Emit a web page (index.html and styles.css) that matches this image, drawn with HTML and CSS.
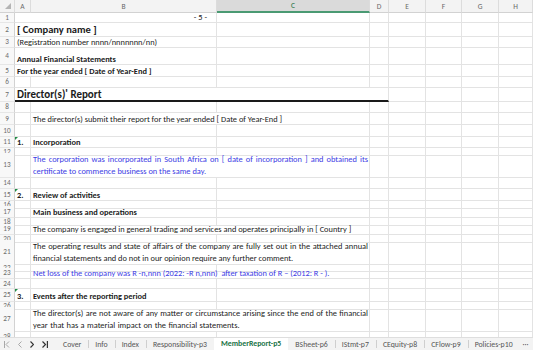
FILE: index.html
```html
<!DOCTYPE html>
<html lang="en">
  <head>
    <meta charset="UTF-8" />
    <meta name="viewport" content="width=device-width, initial-scale=1.0" />
    <title>MemberReport-p5</title>
    <link rel="stylesheet" href="styles.css">
  </head>
  <body>
    <div class="sheet">
      <div class="colhead">
        <div class="hc corner">
          <svg width="6" height="6" viewBox="0 0 6 6"><path d="M6 0 L6 6 L0 6 Z" fill="#b4b4b4" /></svg>
        </div>
        <div class="hc">A</div>
        <div class="hc">B</div>
        <div class="hc active">C</div>
        <div class="hc">D</div>
        <div class="hc">E</div>
        <div class="hc">F</div>
        <div class="hc">G</div>
        <div class="hc">H</div>
      </div>

      <div class="row h10">
        <div class="rn">1</div>
        <div class="c s2 page">- 5 -</div>
        <div class="c"></div><div class="c"></div><div class="c"></div><div class="c"></div><div class="c"></div><div class="c"></div>
      </div>
      <div class="row h14">
        <div class="rn">2</div>
        <div class="c s2 company">[ Company name ]</div>
        <div class="c"></div><div class="c"></div><div class="c"></div><div class="c"></div><div class="c"></div><div class="c"></div>
      </div>
      <div class="row h11">
        <div class="rn">3</div>
        <div class="c s2">(Registration number nnnn/nnnnnnn/nn)</div>
        <div class="c"></div><div class="c"></div><div class="c"></div><div class="c"></div><div class="c"></div><div class="c"></div>
      </div>
      <div class="row h17">
        <div class="rn">4</div>
        <div class="c s2 bold">Annual Financial Statements</div>
        <div class="c"></div><div class="c"></div><div class="c"></div><div class="c"></div><div class="c"></div><div class="c"></div>
      </div>
      <div class="row h12">
        <div class="rn">5</div>
        <div class="c s2 bold">For the year ended [ Date of Year-End ]</div>
        <div class="c"></div><div class="c"></div><div class="c"></div><div class="c"></div><div class="c"></div><div class="c"></div>
      </div>
      <div class="row h11">
        <div class="rn">6</div>
        <div class="c"></div><div class="c"></div><div class="c"></div><div class="c"></div><div class="c"></div><div class="c"></div><div class="c"></div><div class="c"></div>
      </div>
      <div class="row h14">
        <div class="rn">7</div>
        <div class="c s4 title">Director(s)' Report</div>
        <div class="c"></div><div class="c"></div><div class="c"></div><div class="c"></div>
      </div>
      <div class="row h11">
        <div class="rn">8</div>
        <div class="c"></div><div class="c"></div><div class="c"></div><div class="c"></div><div class="c"></div><div class="c"></div><div class="c"></div><div class="c"></div>
      </div>
      <div class="row h12">
        <div class="rn">9</div>
        <div class="c"></div>
        <div class="c s2">The director(s) submit their report for the year ended [ Date of Year-End ]</div>
        <div class="c"></div><div class="c"></div><div class="c"></div><div class="c"></div><div class="c"></div>
      </div>
      <div class="row h12">
        <div class="rn">10</div>
        <div class="c"></div><div class="c"></div><div class="c"></div><div class="c"></div><div class="c"></div><div class="c"></div><div class="c"></div><div class="c"></div>
      </div>
      <div class="row h11">
        <div class="rn">11</div>
        <div class="c bold flag">1.</div>
        <div class="c bold">Incorporation</div>
        <div class="c"></div><div class="c"></div><div class="c"></div><div class="c"></div><div class="c"></div><div class="c"></div>
      </div>
      <div class="row h5">
        <div class="rn">12</div>
        <div class="c"></div><div class="c"></div><div class="c"></div><div class="c"></div><div class="c"></div><div class="c"></div><div class="c"></div><div class="c"></div>
      </div>
      <div class="row h25">
        <div class="rn">13</div>
        <div class="c"></div>
        <div class="c s2 wrap blue">The corporation was incorporated in South Africa on [ date of incorporation ] and obtained its certificate to commence business on the same day.</div>
        <div class="c"></div><div class="c"></div><div class="c"></div><div class="c"></div><div class="c"></div>
      </div>
      <div class="row h11">
        <div class="rn">14</div>
        <div class="c"></div><div class="c"></div><div class="c"></div><div class="c"></div><div class="c"></div><div class="c"></div><div class="c"></div><div class="c"></div>
      </div>
      <div class="row h12">
        <div class="rn">15</div>
        <div class="c bold flag">2.</div>
        <div class="c bold">Review of activities</div>
        <div class="c"></div><div class="c"></div><div class="c"></div><div class="c"></div><div class="c"></div><div class="c"></div>
      </div>
      <div class="row h5">
        <div class="rn">16</div>
        <div class="c"></div><div class="c"></div><div class="c"></div><div class="c"></div><div class="c"></div><div class="c"></div><div class="c"></div><div class="c"></div>
      </div>
      <div class="row h12">
        <div class="rn">17</div>
        <div class="c"></div>
        <div class="c bold">Main business and operations</div>
        <div class="c"></div><div class="c"></div><div class="c"></div><div class="c"></div><div class="c"></div><div class="c"></div>
      </div>
      <div class="row h6">
        <div class="rn">18</div>
        <div class="c"></div><div class="c"></div><div class="c"></div><div class="c"></div><div class="c"></div><div class="c"></div><div class="c"></div><div class="c"></div>
      </div>
      <div class="row h11">
        <div class="rn">19</div>
        <div class="c"></div>
        <div class="c s2">The company is engaged in general trading and services and operates principally in [ Country ]</div>
        <div class="c"></div><div class="c"></div><div class="c"></div><div class="c"></div><div class="c"></div>
      </div>
      <div class="row h5">
        <div class="rn">20</div>
        <div class="c"></div><div class="c"></div><div class="c"></div><div class="c"></div><div class="c"></div><div class="c"></div><div class="c"></div><div class="c"></div>
      </div>
      <div class="row h24">
        <div class="rn">21</div>
        <div class="c"></div>
        <div class="c s2 wrap">The operating results and state of affairs of the company are fully set out in the attached annual financial statements and do not in our opinion require any further comment.</div>
        <div class="c"></div><div class="c"></div><div class="c"></div><div class="c"></div><div class="c"></div>
      </div>
      <div class="row h4">
        <div class="rn">22</div>
        <div class="c"></div><div class="c"></div><div class="c"></div><div class="c"></div><div class="c"></div><div class="c"></div><div class="c"></div><div class="c"></div>
      </div>
      <div class="row h11">
        <div class="rn">23</div>
        <div class="c"></div>
        <div class="c s2 blue">Net loss of the company was R -n,nnn (2022: -R n,nnn)&nbsp; after taxation of R – (2012: R - ).</div>
        <div class="c"></div><div class="c"></div><div class="c"></div><div class="c"></div><div class="c"></div>
      </div>
      <div class="row h10">
        <div class="rn">24</div>
        <div class="c"></div><div class="c"></div><div class="c"></div><div class="c"></div><div class="c"></div><div class="c"></div><div class="c"></div><div class="c"></div>
      </div>
      <div class="row h13">
        <div class="rn">25</div>
        <div class="c bold flag">3.</div>
        <div class="c bold">Events after the reporting period</div>
        <div class="c"></div><div class="c"></div><div class="c"></div><div class="c"></div><div class="c"></div><div class="c"></div>
      </div>
      <div class="row h5">
        <div class="rn">26</div>
        <div class="c"></div><div class="c"></div><div class="c"></div><div class="c"></div><div class="c"></div><div class="c"></div><div class="c"></div><div class="c"></div>
      </div>
      <div class="row h24">
        <div class="rn">27</div>
        <div class="c"></div>
        <div class="c s2 wrap loose">The director(s) are not aware of any matter or circumstance arising since the end of the financial year that has a material impact on the financial statements.</div>
        <div class="c"></div><div class="c"></div><div class="c"></div><div class="c"></div><div class="c"></div>
      </div>
      <div class="row h12">
        <div class="rn">28</div>
        <div class="c"></div><div class="c"></div><div class="c"></div><div class="c"></div><div class="c"></div><div class="c"></div><div class="c"></div><div class="c"></div>
      </div>
    </div>

    <div class="tabs">
      <div class="nav">
        <svg width="6" height="7" viewBox="0 0 6 7"><path d="M0.5 0 V7 M5 0.5 L2 3.5 L5 6.5" stroke="#a8a8a8" fill="none" /></svg>
        <svg width="4" height="7" viewBox="0 0 4 7"><path d="M3.5 0.5 L0.5 3.5 L3.5 6.5" stroke="#a8a8a8" fill="none" /></svg>
        <svg width="4" height="7" viewBox="0 0 4 7"><path d="M0.5 0.5 L3.5 3.5 L0.5 6.5" stroke="#333" stroke-width="1.2" fill="none" /></svg>
        <svg width="6" height="7" viewBox="0 0 6 7"><path d="M0.5 0.5 L3.5 3.5 L0.5 6.5 M5.4 0 V7" stroke="#333" stroke-width="1.2" fill="none" /></svg>
      </div>
      <div class="tab">Cover</div>
      <div class="tab">Info</div>
      <div class="tab">Index</div>
      <div class="tab">Responsibility-p3</div>
      <div class="tab current">MemberReport-p5</div>
      <div class="tab">BSheet-p6</div>
      <div class="tab">IStmt-p7</div>
      <div class="tab">CEquity-p8</div>
      <div class="tab">CFlow-p9</div>
      <div class="tab">Policies-p10</div>
      <div class="tab more">···</div>
    </div>
  </body>
</html>
```

FILE: styles.css
```css
body {
  margin: 0;
  width: 533px;
  height: 350px;
  overflow: hidden;
  background: #fff;
  color: #1b1b1b;
  font-family: Carlito, Lato, "Open Sans", sans-serif;
  font-size: 8.4px;
}

.sheet {
  height: 337px;
  overflow: hidden;
  display: flex;
  flex-direction: column;
}

.colhead,
.row {
  display: grid;
  grid-template-columns: 15px 16px 186px 153px 19px 37px 36px 37px 34px;
  flex: none;
}

/* column header */
.colhead {
  height: 13px;
  background: #f3f3f3;
}

.hc {
  display: flex;
  align-items: center;
  justify-content: center;
  box-sizing: border-box;
  border-right: 1px solid #dcdcdc;
  border-bottom: 1px solid #d2d2d2;
  color: #6b6b6b;
  font-size: 7.5px;
}

.hc.corner {
  align-items: flex-end;
  justify-content: flex-end;
  padding: 0 3px 3px 0;
}

.hc.active {
  background: #dadada;
  color: #217346;
  border-bottom: 2px solid #4a9a73;
}

/* rows */
.h4 { height: 4px; }
.h5 { height: 5px; }
.h6 { height: 6px; }
.h10 { height: 10px; }
.h11 { height: 11px; }
.h12 { height: 12px; }
.h13 { height: 13px; }
.h14 { height: 14px; }
.h17 { height: 17px; }
.h24 { height: 24px; }
.h25 { height: 25px; }

.rn {
  display: flex;
  align-items: center;
  justify-content: center;
  box-sizing: border-box;
  background: #f8f8f8;
  border-right: 1px solid #d2d2d2;
  border-bottom: 1px solid #e6e6e6;
  color: #6b6b6b;
  font-size: 7.2px;
  line-height: 1;
}

.c {
  position: relative;
  display: flex;
  align-items: flex-end;
  box-sizing: border-box;
  padding: 0 1px 1px 2px;
  border-right: 1px solid #e3e3e3;
  border-bottom: 1px solid #e3e3e3;
  white-space: nowrap;
  line-height: 1;
}

.s2 { grid-column: span 2; }
.s4 { grid-column: span 4; }

.bold { font-weight: bold; }
.blue { color: #3b3be4; }

.page {
  justify-content: flex-end;
  padding-right: 9px;
}

.company {
  font-size: 10.5px;
  font-weight: bold;
}

.title {
  font-size: 11px;
  font-weight: bold;
  border-bottom: 2px solid #1a1a1a;
  padding-bottom: 0;
}

.wrap {
  display: block;
  white-space: normal;
  text-align: justify;
  line-height: 12px;
  padding: 0 1px 0 2px;
}

.wrap.loose {
  word-spacing: 0.5px;
}

/* green "number stored as text" marker */
.flag::before {
  content: "";
  position: absolute;
  top: 0;
  left: 0;
  border-top: 3px solid #1f8b45;
  border-right: 3px solid transparent;
}

/* sheet tabs */
.tabs {
  height: 13px;
  display: flex;
  align-items: stretch;
  background: #f3f3f3;
  border-top: 1px solid #dedede;
  box-sizing: border-box;
  color: #555;
  font-size: 7.8px;
  white-space: nowrap;
  overflow: hidden;
}

.nav {
  flex: none;
  width: 56px;
  display: flex;
  align-items: center;
  gap: 8px;
  padding-left: 4px;
  box-sizing: border-box;
}

.tab {
  flex: none;
  display: flex;
  align-items: center;
  padding: 0 7px;
  position: relative;
}

.tab + .tab::before {
  content: "";
  position: absolute;
  left: 0;
  top: 2px;
  bottom: 2px;
  border-left: 1px solid #cfcfcf;
}

.tab.current {
  background: #fff;
  margin-top: -1px;
  color: #217346;
  font-weight: bold;
}

.tab.current::before,
.tab.current + .tab::before {
  display: none;
}

.tab.more {
  padding: 0 2px 0 3px;
}

.tab.more::before {
  display: none;
}
```
